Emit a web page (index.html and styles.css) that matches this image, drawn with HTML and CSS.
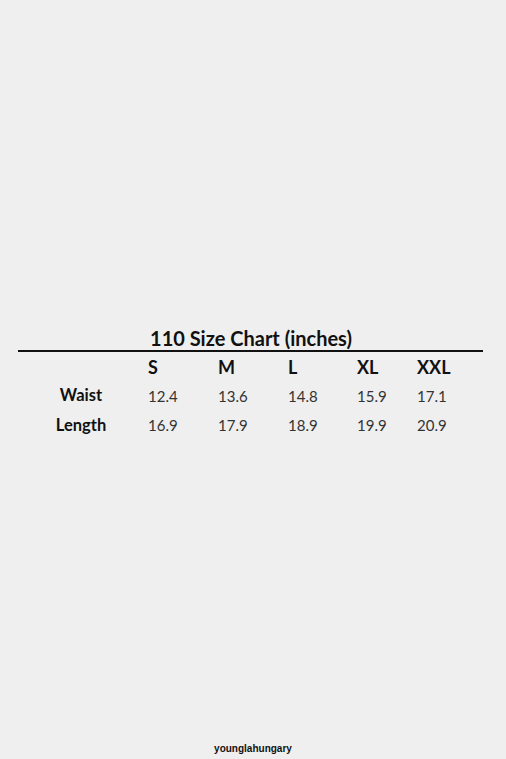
FILE: index.html
```html
<!DOCTYPE html>
<html>
<head>
<meta charset="utf-8">
<link rel="stylesheet" href="styles.css">
</head>
<body>
<div class="page">
  <div class="chart">
    <h1 class="title">110 Size Chart (inches)</h1>
    <div class="rule"></div>
    <div class="grid">
      <div class="label"></div>
      <div class="head">S</div>
      <div class="head">M</div>
      <div class="head">L</div>
      <div class="head">XL</div>
      <div class="head">XXL</div>

      <div class="label">Waist</div>
      <div class="val">12.4</div>
      <div class="val">13.6</div>
      <div class="val">14.8</div>
      <div class="val">15.9</div>
      <div class="val">17.1</div>

      <div class="label">Length</div>
      <div class="val">16.9</div>
      <div class="val">17.9</div>
      <div class="val">18.9</div>
      <div class="val">19.9</div>
      <div class="val">20.9</div>
    </div>
  </div>
  <div class="footer">younglahungary</div>
</div>
</body>
</html>
```

FILE: styles.css
```css
html, body {
  margin: 0;
  padding: 0;
  background: #efefef;
}
.page {
  width: 506px;
  height: 759px;
  display: flex;
  flex-direction: column;
  font-family: "Lato", "Open Sans", sans-serif;
}
.chart {
  padding-top: 326px;
  flex: 1;
}
.title {
  margin: 0;
  font-size: 20px;
  font-weight: 700;
  color: #111;
  text-align: center;
  line-height: 24px;
  padding-right: 4px;
}
.rule {
  margin: 0 23px 0 18px;
  height: 2px;
  background: #111;
}
.grid {
  display: grid;
  grid-template-columns: 130px 70px 70px 69px 60px auto;
  grid-template-rows: 28px 29px 30px;
  align-items: center;
  margin-left: 18px;
  margin-top: 1px;
}
.label {
  text-align: center;
  padding-right: 4px;
  font-weight: 700;
  font-size: 16.5px;
  color: #111;
  line-height: 27px;
}
.head {
  font-weight: 700;
  font-size: 18px;
  color: #111;
  line-height: 28px;
}
.val {
  font-size: 15px;
  color: #333;
  line-height: 30px;
}
.footer {
  text-align: center;
  font-family: "Liberation Sans", Arial, sans-serif;
  font-weight: 700;
  font-size: 10px;
  color: #111;
  padding-bottom: 5px;
}
```
